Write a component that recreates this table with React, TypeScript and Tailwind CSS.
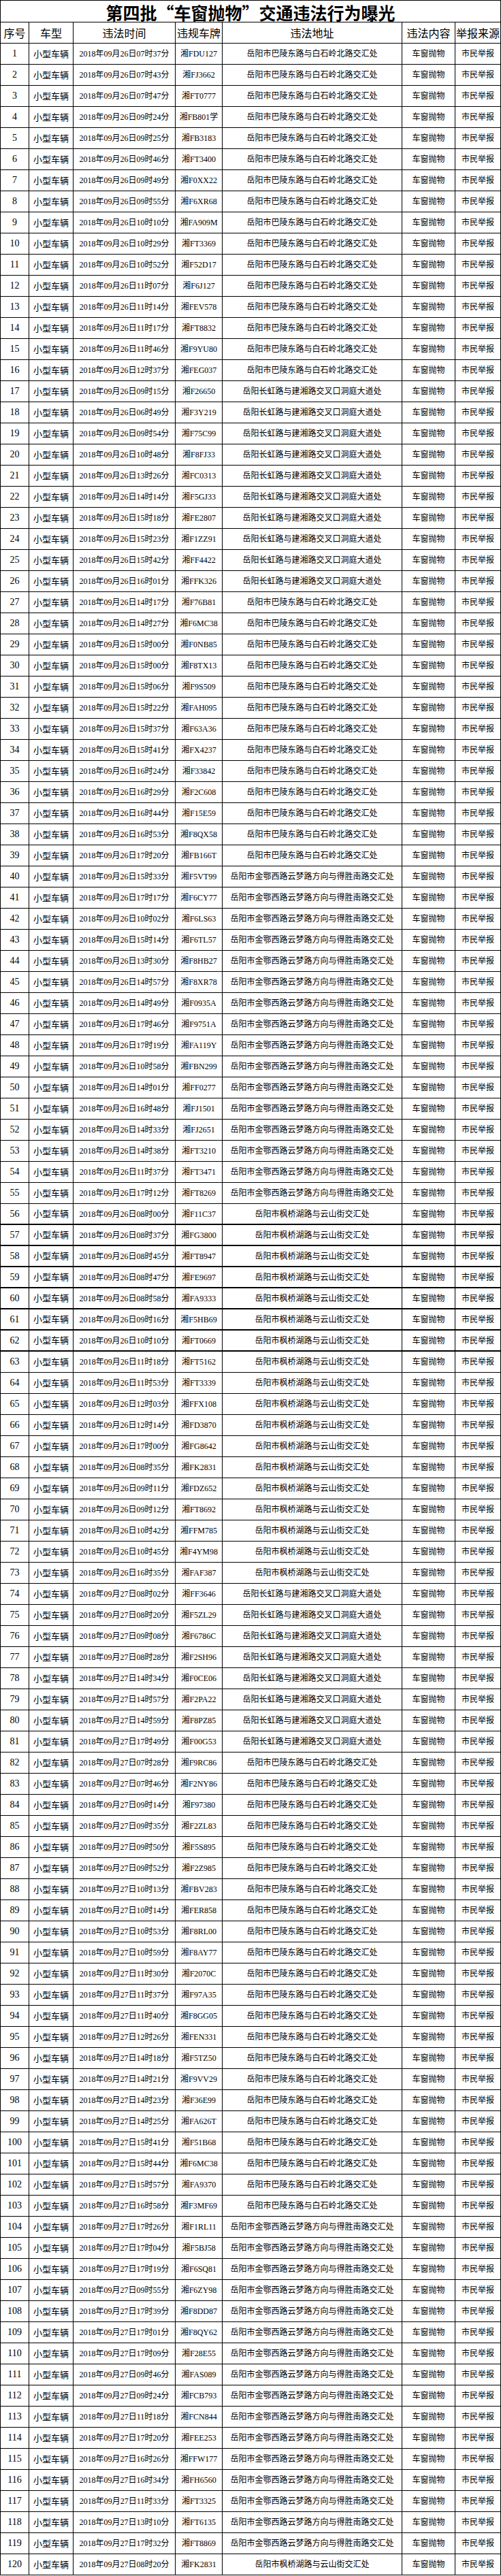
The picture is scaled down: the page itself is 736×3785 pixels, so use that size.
const ADDR: Record<string, string> = {
  A: "岳阳市巴陵东路与白石岭北路交汇处",
  B: "岳阳长虹路与建湘路交叉口洞庭大道处",
  C: "岳阳市金鄂西路云梦路方向与得胜南路交汇处",
  D: "岳阳市枫桥湖路与云山街交汇处",
};

// day hhmm plate address
const RAW = `
26 0737 FDU127 A
26 0743 FJ3662 A
26 0747 FT0777 A
26 0924 FB801学 A
26 0925 FB3183 A
26 0946 FT3400 A
26 0949 F0XX22 A
26 0955 F6XR68 A
26 1010 FA909M A
26 1029 FT3369 A
26 1052 F52D17 A
26 1107 F6J127 A
26 1114 FEV578 A
26 1117 FT8832 A
26 1146 F9YU80 A
26 1237 FEG037 A
26 0915 F26650 B
26 0649 F3Y219 B
26 0954 F75C99 B
26 1048 F8FJ33 B
26 1326 FC0313 B
26 1414 F5GJ33 B
26 1518 FE2807 B
26 1523 F1ZZ91 B
26 1542 FF4422 B
26 1601 FFK326 B
26 1417 F76B81 A
26 1427 F6MC38 A
26 1500 F0NB85 A
26 1500 F8TX13 A
26 1506 F9S509 A
26 1522 FAH095 A
26 1537 F63A36 A
26 1541 FX4237 A
26 1624 F33842 A
26 1629 F2C608 A
26 1644 F15E59 A
26 1653 F8QX58 A
26 1720 FB166T A
26 1533 F5VT99 C
26 1717 F6CY77 C
26 1002 F6LS63 C
26 1514 F6TL57 C
26 1330 F8HB27 C
26 1457 F8XR78 C
26 1449 F0935A C
26 1746 F9751A C
26 1719 FA119Y C
26 1058 FBN299 C
26 1401 FF0277 C
26 1648 FJ1501 C
26 1433 FJ2651 C
26 1438 FT3210 C
26 1137 FT3471 C
26 1712 FT8269 C
26 0800 F11C37 D
26 0837 FG3800 D
26 0845 FT8947 D
26 0847 FE9697 D
26 0858 FA9333 D
26 0916 F5HB69 D
26 1010 FT0669 D
26 1118 FT5162 D
26 1153 FT3339 D
26 1203 FFX108 D
26 1214 FD3870 D
26 1700 FG8642 D
26 0835 FK2831 D
26 0911 FDZ652 D
26 0912 FT8692 D
26 1042 FFM785 D
26 1045 F4YM98 D
26 1635 FAF387 D
27 0802 FF3646 B
27 0820 F5ZL29 B
27 0908 F6786C B
27 0828 F2SH96 B
27 1434 F0CE06 B
27 1457 F2PA22 B
27 1459 F8PZ85 B
27 1749 F00G53 B
27 0728 F9RC86 A
27 0746 F2NY86 A
27 0914 F97380 A
27 0935 F2ZL83 A
27 0950 F5S895 A
27 0952 F2Z985 A
27 1013 FBV283 A
27 1014 FER858 A
27 1053 F8RL00 A
27 1059 F8AY77 A
27 1130 F2070C A
27 1137 F97A35 A
27 1140 F8GG05 A
27 1226 FEN331 A
27 1418 F5TZ50 A
27 1421 F9VV29 A
27 1423 F36E99 A
27 1425 FA626T A
27 1541 F51B68 A
27 1544 F6MC38 A
27 1557 FA9370 A
27 1658 F3MF69 A
27 1726 F1RL11 C
27 1704 F5BJ58 C
27 1719 F6SQ81 C
27 0955 F6ZY98 C
27 1739 F8DD87 C
27 1701 F8QY62 C
27 1709 F28E55 C
27 0946 FAS089 C
27 0924 FCB793 C
27 1118 FCN844 C
27 1720 FEE253 C
27 1626 FFW177 C
27 1634 FH6560 C
27 1133 FT3325 C
27 1310 FT6135 C
27 1732 FT8869 C
27 0820 FK2831 D
`;

const rows = RAW.trim()
  .split("\n")
  .map((line) => {
    const [day, hm, plate, addr] = line.trim().split(" ");
    return {
      time: `2018年09月${day}日${hm.slice(0, 2)}时${hm.slice(2)}分`,
      plate: `湘${plate}`,
      addr: ADDR[addr],
    };
  });

const cell = "flex shrink-0 items-center justify-center border-r border-black whitespace-nowrap";

export default function App() {
  return (
    <div className="w-[736px] bg-white text-black font-['Liberation_Serif','Noto_Sans_CJK_SC',serif]">
      <div className="border-l border-t border-black">
        <div className="flex h-[32px] items-center justify-center border-b border-r border-black pt-[3px] font-['Noto_Sans_CJK_SC',sans-serif] text-[25px] font-bold leading-none">
          第四批“车窗抛物”交通违法行为曝光
        </div>

        <div className="flex h-[31px] border-b border-black font-['Noto_Sans_CJK_SC',sans-serif] text-[16px] leading-none">
          <div className={`${cell} w-[42px]`}>序号</div>
          <div className={`${cell} w-[65px]`}>车型</div>
          <div className={`${cell} w-[150px]`}>违法时间</div>
          <div className={`${cell} w-[69px]`}>违规车牌</div>
          <div className={`${cell} w-[264px]`}>违法地址</div>
          <div className={`${cell} w-[78px]`}>违法内容</div>
          <div className={`${cell} w-[67px]`}>举报来源</div>
        </div>

        {rows.map((r, i) => (
          <div
            key={i}
            className={`flex h-[31px] border-black text-[12px] leading-none ${
              i >= 55 && i <= 61 ? "border-b-2" : "border-b"
            }`}
          >
            <div className={`${cell} w-[42px] text-[14px]`}>{i + 1}</div>
            <div className={`${cell} w-[65px] text-[13px]`}>小型车辆</div>
            <div className={`${cell} w-[150px]`}>{r.time}</div>
            <div className={`${cell} w-[69px]`}>{r.plate}</div>
            <div className={`${cell} w-[264px]`}>{r.addr}</div>
            <div className={`${cell} w-[78px]`}>车窗抛物</div>
            <div className={`${cell} w-[67px]`}>市民举报</div>
          </div>
        ))}
      </div>
    </div>
  );
}
